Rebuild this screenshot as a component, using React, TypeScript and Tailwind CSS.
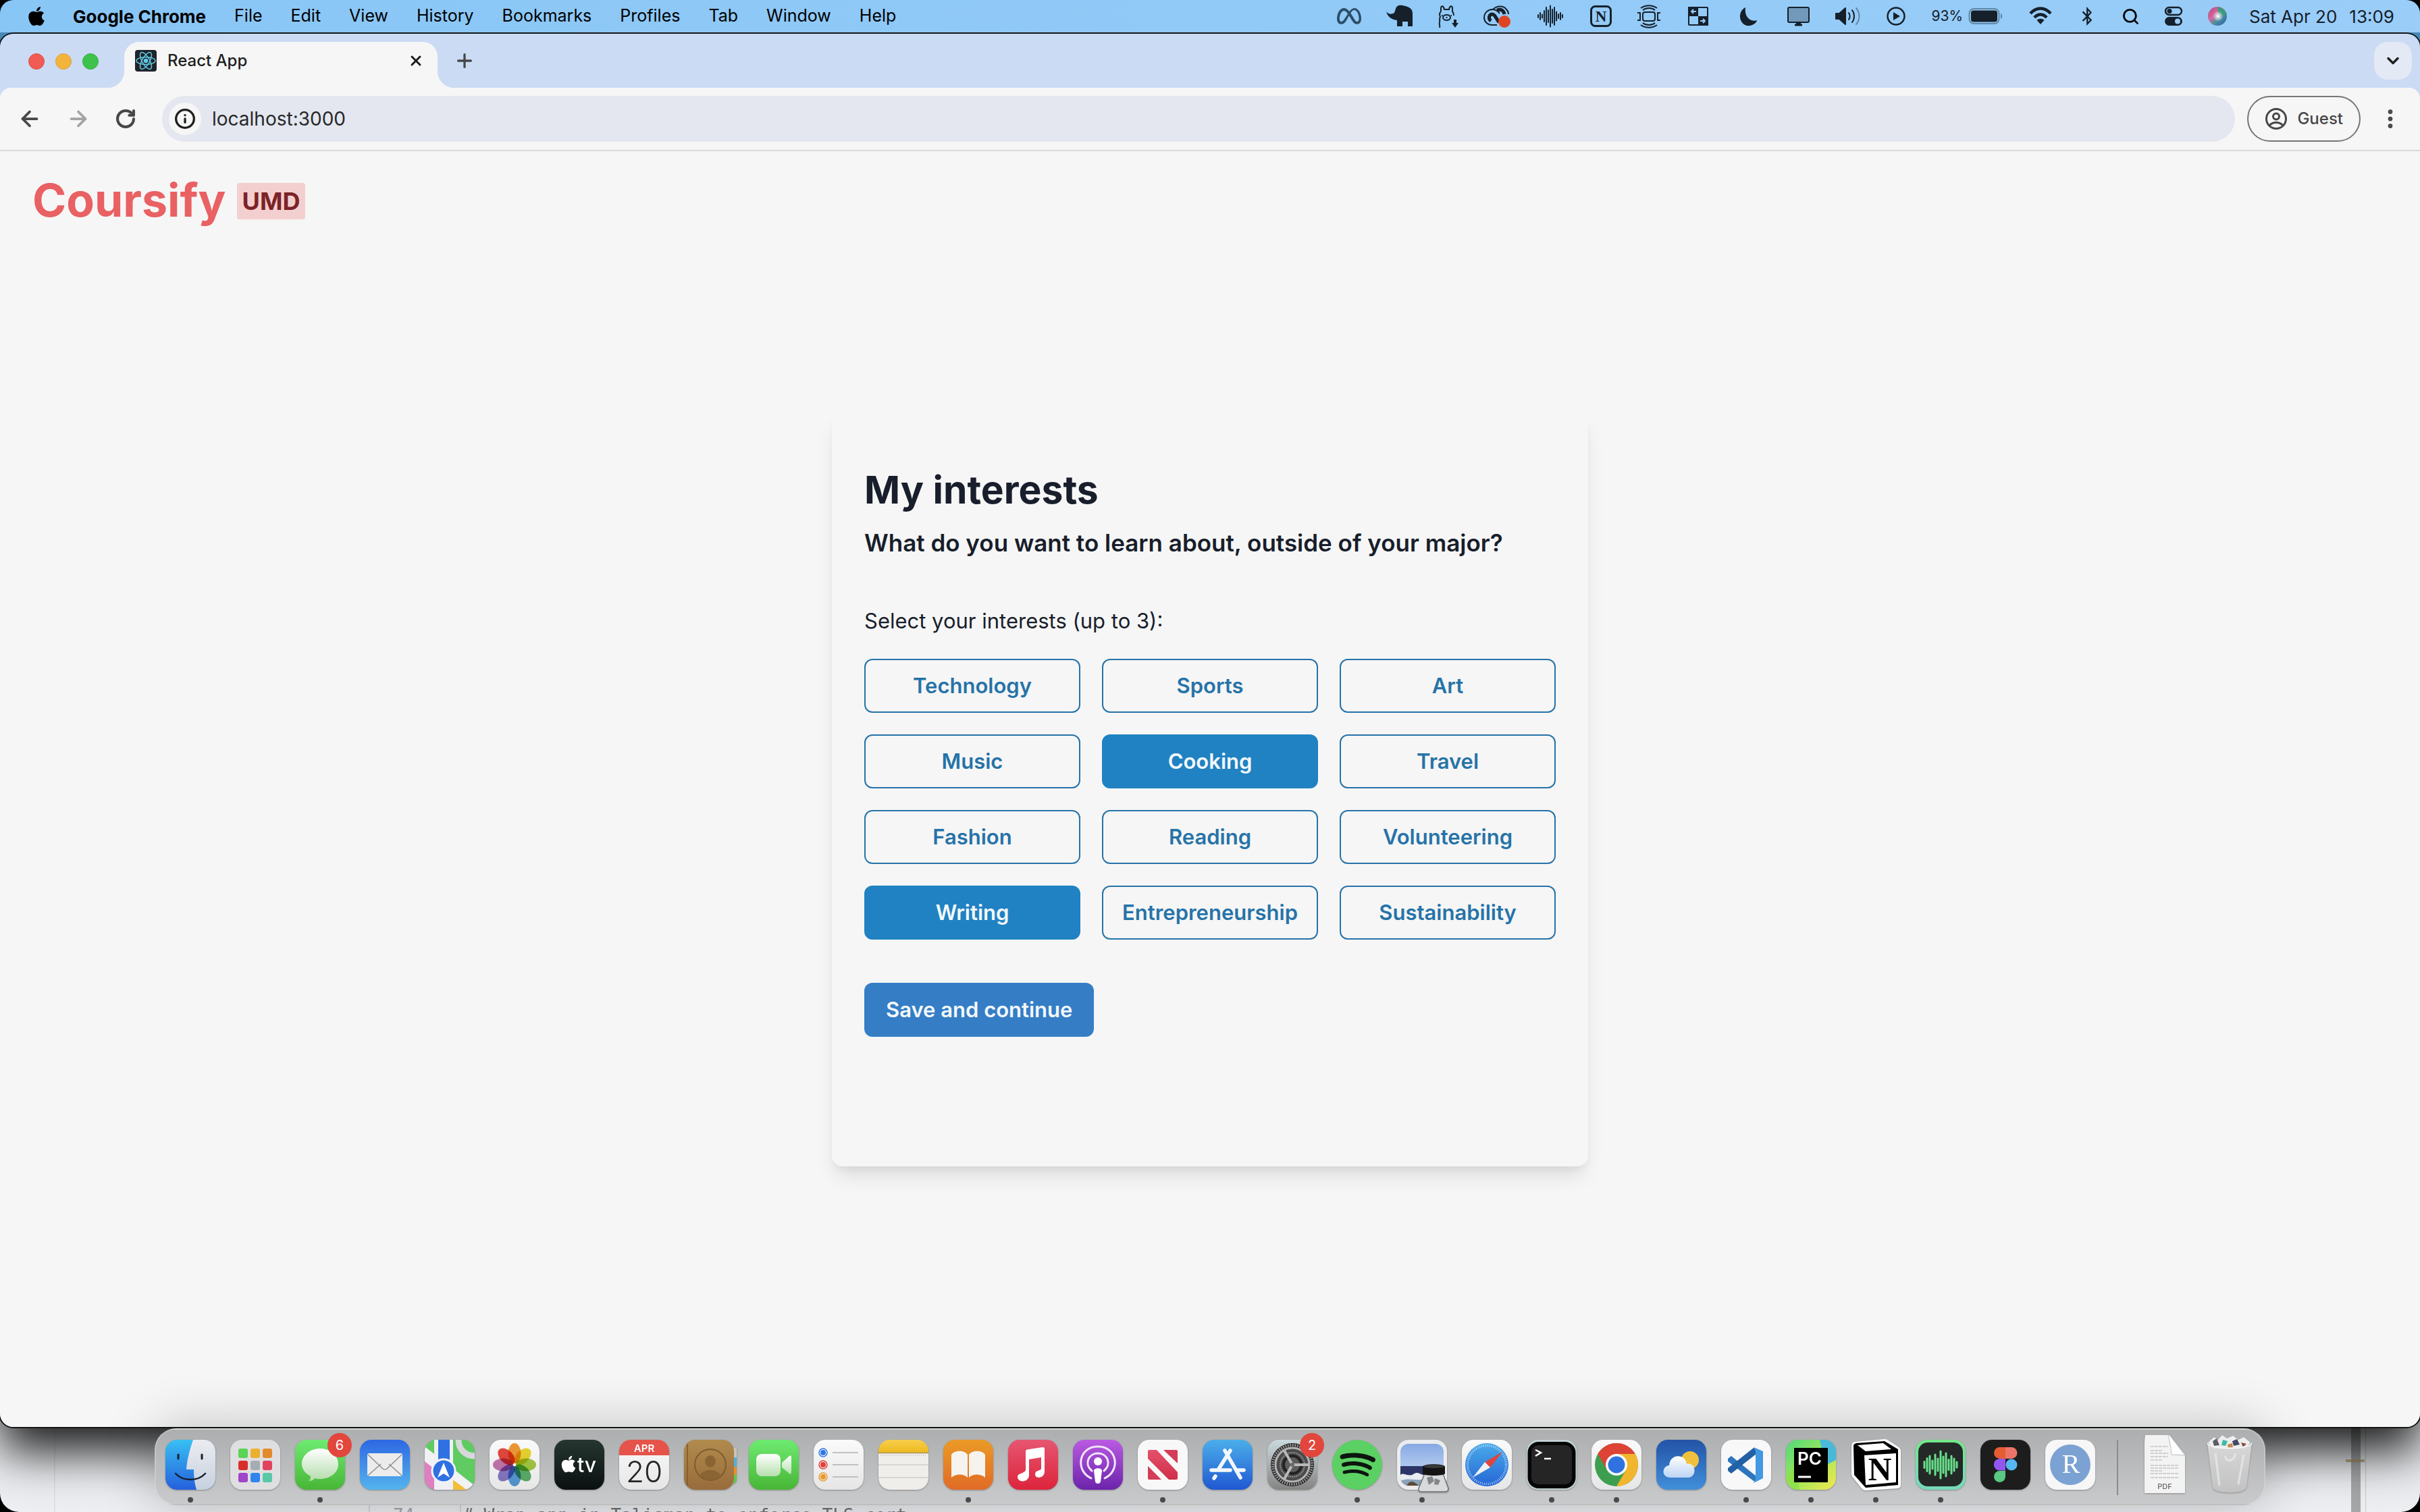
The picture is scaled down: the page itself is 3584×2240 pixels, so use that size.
import { useState } from "react";
import type { ReactNode } from "react";
import { FaApple, FaBluetoothB, FaMeta, FaSpotify } from "react-icons/fa6";
import {
  ArrowLeft,
  ArrowRight,
  ChevronDown,
  EllipsisVertical,
  Info,
  Plus,
  RotateCw,
  Search,
  X,
} from "lucide-react";

const INK = "#15202b";

const menus = ["File", "Edit", "View", "History", "Bookmarks", "Profiles", "Tab", "Window", "Help"];

const interests = [
  "Technology",
  "Sports",
  "Art",
  "Music",
  "Cooking",
  "Travel",
  "Fashion",
  "Reading",
  "Volunteering",
  "Writing",
  "Entrepreneurship",
  "Sustainability",
];

const MAX_INTERESTS = 3;

/* ---------- menu bar ---------- */

interface StatusItemProps {
  label: string;
  width: number;
  children: ReactNode;
}

function StatusItem({ label, width, children }: StatusItemProps) {
  return (
    <button type="button" aria-label={label} className="flex h-12 items-center justify-center">
      <svg
        width={width}
        height={36}
        viewBox={`0 0 ${width} 36`}
        fill="none"
        stroke={INK}
        strokeWidth={2}
        strokeLinejoin="round"
      >
        {children}
      </svg>
    </button>
  );
}

function StatusIcons() {
  const bars = [4, 10, 5, 16, 26, 18, 31, 20, 26, 13, 6, 10, 4];
  return (
    <>
      <StatusItem label="Meta" width={40}>
        <FaMeta x={4} y={0} size={36} fill="#2c4e68" stroke="none" />
      </StatusItem>
      <StatusItem label="TablePlus" width={40}>
        <path
          d="M0 11C4 16 8 15 12 13L14 7C15 2 20 1 24 2C33 4 39 6 39 14V33H32V26H24V33H16V24C8 23 2 19 0 11Z"
          fill={INK}
          stroke="none"
        />
      </StatusItem>
      <StatusItem label="Ollama" width={30}>
        <path d="M4 11V6C4 2 8 2 9 8H16C17 2 21 2 21 6V11C23 13 23 15 23 17M4 11C1 14 2 17 3 19C1 22 3 24 2 27C1 30 3 31 2 35" />
        <ellipse cx={12.5} cy={20} rx={5.5} ry={4} />
        <path d="M12.5 19V21M5 17H6.5M18.500 17H20" />
        <path d="M25 23V29" strokeWidth={4} />
        <path d="M20 28H30L25 35Z" fill={INK} stroke="none" />
      </StatusItem>
      <StatusItem label="Creative Cloud" width={40}>
        <path d="M20 31H13C6 31 1 26 1 20C1 13 7 8 13 8C19 8 22 11 24 14M14 8C20 2 30 2 34 8C36 10 37 12 37 15" />
        <path d="M11 25C6 21 9 15 13 15C17 15 19 22 23 27M20 9C27 7 30 10 31 15" strokeWidth={5} />
        <circle cx={31} cy={26} r={9} fill="#df4422" stroke="none" />
      </StatusItem>
      <StatusItem label="Wave" width={44}>
        {bars.map((h, i) => (
          <path key={i} d={`M${4 + i * 3} ${18 - h / 2}V${18 + h / 2}`} strokeLinecap="round" />
        ))}
      </StatusItem>
      <StatusItem label="Notion" width={32}>
        <rect x={1.5} y={3.5} width={29} height={29} rx={6} strokeWidth={3} />
        <text
          x={16}
          y={26}
          textAnchor="middle"
          fill={INK}
          stroke="none"
          className="font-['Liberation_Serif',serif] text-[23px] font-bold"
        >
          N
        </text>
      </StatusItem>
      <StatusItem label="Rotation" width={36}>
        <rect x={9} y={12} width={18} height={13} rx={3} />
        <path d="M1 13H5V24H1M35 13H31V24H35M9 9C14 5 22 5 27 9M9 28C14 32 22 32 27 28M6 6C13 1 23 1 30 6M6 31C13 36 23 36 30 31" />
      </StatusItem>
      <StatusItem label="Layout" width={36}>
        <rect x={4} y={5} width={28} height={26} rx={1} />
        <path d="M3 4H18V18H3ZM18 18H33V32H18Z" fill={INK} stroke="none" />
        <path d="M15 11H8L11 8M8 11L11 14M21 25H28L25 22M28 25L25 28" stroke="#96ccf6" />
      </StatusItem>
      <StatusItem label="Focus" width={38}>
        <path d="M15 5C4 10 4 28 17 32C24 33 31 29 32 24C22 27 13 19 15 5Z" fill={INK} stroke="none" />
      </StatusItem>
      <StatusItem label="Screen Mirroring" width={36}>
        <rect x={3} y={5} width={31} height={22} rx={2} fill="#7299ba" />
        <path d="M13 31H24M15 29H22" strokeWidth={3} />
      </StatusItem>
      <StatusItem label="Sound" width={38}>
        <path d="M1 14H6L15 6V30L6 22H1Z" fill={INK} />
        <path d="M20 13C22 16 22 20 20 23M25 9C29 14 29 22 25 27" strokeLinecap="round" />
        <path d="M31 6C37 13 37 23 31 30" strokeLinecap="round" opacity={0.4} />
      </StatusItem>
      <StatusItem label="Now Playing" width={30}>
        <circle cx={15} cy={18} r={12.5} strokeWidth={2.5} />
        <path d="M11 12L21 18L11 24Z" fill={INK} stroke="none" />
      </StatusItem>
      <button type="button" className="flex h-12 items-center gap-2 text-[21px] text-[#15202b]">
        93%
        <svg width={52} height={36} viewBox="0 0 52 36" fill="none">
          <rect x={1.5} y={7} width={44} height={22} rx={7} stroke="#5f87a6" strokeWidth={2} />
          <rect x={4} y={9.5} width={39} height={17} rx={4} fill={INK} />
          <path d="M48 14C51 15 51 21 48 22Z" fill="#5f87a6" />
        </svg>
      </button>
      <StatusItem label="Wi-Fi" width={36}>
        <path d="M3 14C12 4 24 4 33 14M9 20C14 14 22 14 27 20" strokeWidth={4.5} />
        <path d="M12.500 24C15 21 21 21 23.500 24L18 30Z" fill={INK} stroke="none" />
      </StatusItem>
      <StatusItem label="Bluetooth" width={28}>
        <FaBluetoothB x={0} y={4} size={28} fill={INK} stroke="none" />
      </StatusItem>
      <StatusItem label="Spotlight" width={26}>
        <Search x={0} y={5} size={27} strokeWidth={2.5} />
      </StatusItem>
      <StatusItem label="Control Center" width={28}>
        <rect x={2} y={5} width={24} height={11} rx={5.500} strokeWidth={2.500} />
        <circle cx={8} cy={10.500} r={3.500} fill={INK} stroke="none" />
        <rect x={1} y={19} width={26} height={13} rx={6.500} fill={INK} stroke="none" />
        <circle cx={20} cy={25.500} r={4} fill="#99ccf7" stroke="none" />
      </StatusItem>
      <StatusItem label="Siri" width={28}>
        <defs>
          <linearGradient id="siri" x1="0" x2="1" y1="0" y2="1">
            <stop offset="0" stopColor="#c2447c" />
            <stop offset="0.4" stopColor="#d06aa0" />
            <stop offset="0.6" stopColor="#4b8f9b" />
            <stop offset="1" stopColor="#2a5fae" />
          </linearGradient>
          <radialGradient id="siriGlow">
            <stop offset="0" stopColor="#ffffff" />
            <stop offset="1" stopColor="#ffffff" stopOpacity="0" />
          </radialGradient>
        </defs>
        <circle cx={14} cy={18} r={14} fill="url(#siri)" stroke="none" />
        <path d="M14 4A14 14 0 0 1 27 15L16 18Z" fill="#3c9a7b" stroke="none" />
        <circle cx={15} cy={18} r={8} fill="url(#siriGlow)" stroke="none" />
      </StatusItem>
    </>
  );
}

function MenuBar() {
  return (
    <header className="relative flex h-12 shrink-0 items-center justify-between rounded-t-[20px] bg-linear-to-r from-[#88c6f6] to-[#9acdf8] pr-[38px] pl-[38px] text-[25px] text-black">
      <nav className="flex items-center gap-[42px]">
        <button type="button" aria-label="Apple menu">
          <FaApple className="size-8" />
        </button>
        <button type="button" className="-ml-1 text-[26px] font-bold">
          Google Chrome
        </button>
        {menus.map((menu) => (
          <button key={menu} type="button">
            {menu}
          </button>
        ))}
      </nav>
      <div className="flex items-center gap-[37px]">
        <StatusIcons />
        <button type="button" className="-ml-1 flex gap-[18px] text-[26px] text-[#15202b]">
          <span>Sat Apr 20</span>
          <span>13:09</span>
        </button>
      </div>
    </header>
  );
}

/* ---------- browser chrome ---------- */

function TabStrip() {
  return (
    <div className="flex h-20 items-end justify-between bg-[#cbdbf4] pr-3 pl-[42px]">
      <div className="flex items-end">
        <div className="flex h-[78px] items-center gap-4">
          <button type="button" aria-label="Close window" className="size-6 rounded-full border border-[#dd5048] bg-[#f15b53]" />
          <button type="button" aria-label="Minimize window" className="size-6 rounded-full border border-[#dfa036] bg-[#f3b43c]" />
          <button type="button" aria-label="Zoom window" className="size-6 rounded-full border border-[#36ae42] bg-[#3dc34b]" />
        </div>
        <span className="ml-[14px] size-6 bg-[radial-gradient(circle_at_0_0,#cbdbf4_24px,#f6f6f6_24px)]" />
        <div className="flex h-[68px] w-[464px] items-center rounded-t-[22px] bg-[#f6f6f6] px-4 pb-3">
          <svg width={32} height={32} viewBox="0 0 32 32" fill="none" stroke="#61cbe6" strokeWidth={1.5}>
            <rect width={32} height={32} rx={4} fill="#20232a" stroke="none" />
            <ellipse cx={16} cy={16} rx={14} ry={5.500} />
            <ellipse cx={16} cy={16} rx={14} ry={5.500} transform="rotate(60 16 16)" />
            <ellipse cx={16} cy={16} rx={14} ry={5.500} transform="rotate(120 16 16)" />
            <circle cx={16} cy={16} r={2.500} fill="#61cbe6" />
          </svg>
          <span className="ml-4 flex-1 text-[24px] font-medium text-[#1f1f1f]">React App</span>
          <button type="button" aria-label="Close tab" className="flex size-8 items-center justify-center">
            <X className="size-6" strokeWidth={3} color="#1f1f1f" />
          </button>
        </div>
        <span className="size-6 bg-[radial-gradient(circle_at_100%_0,#cbdbf4_24px,#f6f6f6_24px)]" />
        <button type="button" aria-label="New tab" className="flex h-20 w-8 items-center justify-center">
          <Plus className="size-8 shrink-0" strokeWidth={2.5} color="#474747" />
        </button>
      </div>
      <button
        type="button"
        aria-label="Search tabs"
        className="mb-3 flex size-14 items-center justify-center rounded-[20px] bg-[#e3e9f5]"
      >
        <ChevronDown className="size-7" strokeWidth={3} color="#1f1f1f" />
      </button>
    </div>
  );
}

function Toolbar() {
  return (
    <div className="bg-[#cbdbf4]">
      <div className="flex h-[94px] items-center rounded-t-[16px] border-b-2 border-[#d9d9d9] bg-[#f6f6f6] pr-[26px] pl-[26px]">
        <div className="flex items-center gap-9 text-[#474747]">
          <button type="button" aria-label="Back">
            <ArrowLeft className="size-9" strokeWidth={2.5} />
          </button>
          <button type="button" aria-label="Forward" className="text-[#a3a3a3]">
            <ArrowRight className="size-9" strokeWidth={2.5} />
          </button>
          <button type="button" aria-label="Reload">
            <RotateCw className="size-8" strokeWidth={3} />
          </button>
        </div>
        <div className="ml-[38px] flex h-[68px] flex-1 items-center gap-4 rounded-full bg-[#e4e7ef] pr-6 pl-[10px]">
          <button
            type="button"
            aria-label="View site information"
            className="flex size-12 items-center justify-center rounded-full bg-[#f6f6f6]"
          >
            <Info className="size-8" strokeWidth={2.5} color="#1f1f1f" />
          </button>
          <input
            type="text"
            aria-label="Address and search bar"
            defaultValue="localhost:3000"
            className="h-12 flex-1 bg-transparent text-[28px] text-[#27282a] outline-none"
          />
        </div>
        <button
          type="button"
          className="ml-[18px] flex h-[68px] items-center gap-[14px] rounded-full border-2 border-[#747775] px-6 text-[24px] font-medium text-[#474747]"
        >
          <svg width={34} height={34} viewBox="0 0 34 34" fill="none" stroke="#474747" strokeWidth={3}>
            <circle cx={17} cy={17} r={14.500} />
            <circle cx={17} cy={13.500} r={4.500} />
            <path d="M7 27C12 21 22 21 27 27" />
          </svg>
          Guest
        </button>
        <button type="button" aria-label="Chrome menu" className="ml-[26px]">
          <EllipsisVertical className="size-9" strokeWidth={2.5} color="#474747" />
        </button>
      </div>
    </div>
  );
}

/* ---------- page ---------- */

function InterestsForm() {
  const [selected, setSelected] = useState<string[]>(["Cooking", "Writing"]);

  const toggle = (interest: string) => {
    if (selected.includes(interest)) {
      setSelected(selected.filter((item) => item !== interest));
    } else if (selected.length < MAX_INTERESTS) {
      setSelected([...selected, interest]);
    }
  };

  return (
    <section className="w-full max-w-[1120px] justify-self-center rounded-[16px] px-12 pt-20 pb-48 text-[#181e2b] shadow-[0_20px_30px_-6px_rgba(0,0,0,0.1),0_8px_12px_-4px_rgba(0,0,0,0.06)]">
      <h1 className="text-[57px] leading-[72px] font-bold">My interests</h1>
      <h2 className="mt-[18px] text-[35px] leading-[48px] font-semibold">
        What do you want to learn about, outside of your major?
      </h2>
      <p id="interests-label" className="mt-[68px] text-[31px] leading-[48px]">
        Select your interests (up to 3):
      </p>
      <div role="group" aria-labelledby="interests-label" className="mt-8 grid grid-cols-3 gap-8">
        {interests.map((interest) => {
          const active = selected.includes(interest);
          return (
            <button
              key={interest}
              type="button"
              aria-pressed={active}
              onClick={() => toggle(interest)}
              className={`h-20 rounded-[12px] border-2 text-[31px] font-semibold ${
                active ? "border-[#2082c2] bg-[#2082c2] text-[#f4f8fb]" : "border-[#2673a8] text-[#2673a8]"
              }`}
            >
              {interest}
            </button>
          );
        })}
      </div>
      <button type="button" className="mt-16 h-20 rounded-[12px] bg-[#357ec6] px-8 text-[31px] font-semibold text-[#f4f8fb]">
        Save and continue
      </button>
    </section>
  );
}

function Page() {
  return (
    <main className="grid flex-1 grid-rows-[1fr_auto_1fr] bg-[#f6f6f6]">
      <div className="flex items-start px-12 pt-8">
        <a href="#" className="flex items-center gap-4">
          <span className="text-[68px] leading-[80px] font-bold text-[#e96163]">Coursify</span>
          <span className="mt-1 flex h-[54px] items-center rounded-[4px] bg-[#f4cfcf] px-2 text-[36px] font-bold text-[#7c2327]">
            UMD
          </span>
        </a>
      </div>
      <InterestsForm />
    </main>
  );
}

/* ---------- dock ---------- */

function Tile({ fill, rx = 17 }: { fill: string; rx?: number }) {
  return <rect width={74} height={74} rx={rx} fill={fill} />;
}

function Gradient({ id, from, to }: { id: string; from: string; to: string }) {
  return (
    <linearGradient id={id} x1="0" x2="0" y1="0" y2="1">
      <stop offset="0" stopColor={from} />
      <stop offset="1" stopColor={to} />
    </linearGradient>
  );
}

function DockDefs() {
  return (
    <svg width={0} height={0} className="absolute" aria-hidden="true">
      <defs>
        <clipPath id="tile">
          <rect width={74} height={74} rx={17} />
        </clipPath>
        <clipPath id="shot">
          <rect x={5} y={6} width={64} height={62} rx={12} />
        </clipPath>
        <Gradient id="finder" from="#38c0f3" to="#2560dc" />
        <Gradient id="finderFace" from="#ebecf1" to="#c6d1df" />
        <Gradient id="green" from="#6eea71" to="#48b636" />
        <Gradient id="bubble" from="#ffffff" to="#b4dcac" />
        <Gradient id="mail" from="#2e68e3" to="#54b4ee" />
        <Gradient id="white" from="#fafafa" to="#e6e6e6" />
        <Gradient id="black" from="#25352f" to="#0b1011" />
        <Gradient id="leather" from="#b08b4d" to="#996c3b" />
        <Gradient id="camera" from="#ffffff" to="#b6dfae" />
        <Gradient id="notes" from="#f8cf4c" to="#ecb91f" />
        <Gradient id="books" from="#ea9a26" to="#e16b26" />
        <Gradient id="music" from="#e65670" to="#dd243c" />
        <Gradient id="podcasts" from="#ba5ae2" to="#6b24ab" />
        <Gradient id="news" from="#e6506c" to="#cf3048" />
        <Gradient id="store" from="#4baeea" to="#2058d2" />
        <Gradient id="settings" from="#cadade" to="#858483" />
        <Gradient id="safari" from="#4aabe9" to="#2465d6" />
        <Gradient id="sky" from="#87a9e4" to="#b0c9ee" />
        <Gradient id="weather" from="#2353a6" to="#418fda" />
        <Gradient id="cloud" from="#ffffff" to="#bcd4f4" />
        <Gradient id="teal" from="#73e889" to="#76d8bd" />
        <Gradient id="trash" from="#dfdfdf" to="#c6c6c6" />
        <linearGradient id="pycharm" x1="0" x2="1" y1="0" y2="1">
          <stop offset="0" stopColor="#51d97c" />
          <stop offset="0.5" stopColor="#9de65b" />
          <stop offset="1" stopColor="#f4e94e" />
        </linearGradient>
      </defs>
    </svg>
  );
}

function Finder() {
  return (
    <g clipPath="url(#tile)">
      <Tile fill="url(#finder)" />
      <path d="M41 0C36 15 32 29 31 44H42C42 55 43 65 46 74H74V0Z" fill="url(#finderFace)" />
      <path d="M19 22V28M54 22V28" stroke="#14202e" strokeWidth={3} strokeLinecap="round" />
      <path d="M15 50C26 62 48 62 59 50" stroke="#14202e" strokeWidth={2.5} fill="none" strokeLinecap="round" />
    </g>
  );
}

function Launchpad() {
  const colors = ["#5bd353", "#ecb02f", "#e48a2c", "#d92f2b", "#a5adb3", "#e2435f", "#a044c9", "#3186ee", "#58c8a6"];
  return (
    <>
      <Tile fill="#dfdfe1" />
      {colors.map((color, i) => (
        <rect key={color} x={12 + (i % 3) * 18} y={13 + Math.floor(i / 3) * 18} width={14} height={14} rx={3} fill={color} />
      ))}
    </>
  );
}

function Messages() {
  return (
    <>
      <Tile fill="url(#green)" />
      <path d="M37 13C52 13 64 23 64 36S52 58 37 58C34 58 31 58 29 57C27 60 24 61 20 61C23 59 23 56 23 54C15 50 10 43 10 36C10 23 22 13 37 13Z" fill="url(#bubble)" />
    </>
  );
}

function Mail() {
  return (
    <>
      <Tile fill="url(#mail)" />
      <rect x={11} y={20} width={52} height={34} rx={3} fill="#ececec" />
      <path d="M12 53L31 36M62 53L43 36M12 22L33 42C36 45 38 45 41 42L62 22" stroke="#8e8e8e" strokeWidth={1.5} fill="none" />
    </>
  );
}

function Maps() {
  return (
    <g clipPath="url(#tile)">
      <Tile fill="#5fcb61" />
      <path d="M0 24V74H20V38Z" fill="#df7fc0" />
      <path d="M0 10L74 68V74H54L0 32Z" fill="#f1f2f4" />
      <path d="M40 74V58L62 74Z" fill="#f2bf35" />
      <path d="M14 0H42V74H14Z" fill="#eef0f4" />
      <path d="M20 0H37V40H20Z" fill="#2f71e2" />
      <path d="M50 0C50 14 60 24 74 24" stroke="#d6d8dc" strokeWidth={9} fill="none" />
      <circle cx={28} cy={46} r={17} fill="#2f71e2" stroke="#f1f3f7" strokeWidth={3} />
      <path d="M28 34L37 56L28 50L19 56Z" fill="#ffffff" />
    </g>
  );
}

function Photos() {
  const petals = ["#f19a37", "#ecd730", "#a5cb45", "#5fb36c", "#5a9fdb", "#8a7bc9", "#c678b0", "#e5493f"];
  return (
    <>
      <Tile fill="url(#white)" />
      {petals.map((color, i) => (
        <ellipse
          key={color}
          cx={37}
          cy={20}
          rx={9.5}
          ry={15}
          fill={color}
          transform={`rotate(${i * 45} 37 37)`}
          className="mix-blend-multiply"
        />
      ))}
      <circle cx={37} cy={37} r={2} fill="#ffffff" opacity={0.7} />
    </>
  );
}

function AppleTv() {
  return (
    <>
      <Tile fill="url(#black)" />
      <FaApple x={7} y={22} size={28} fill="#ffffff" />
      <text x={34} y={48} fill="#ffffff" className="text-[30px] font-medium">
        tv
      </text>
    </>
  );
}

function Calendar() {
  return (
    <g clipPath="url(#tile)">
      <Tile fill="url(#white)" />
      <rect width={74} height={23} fill="#e5534a" />
      <text x={37} y={18} textAnchor="middle" fill="#ffffff" className="text-[15px] font-semibold">
        APR
      </text>
      <text x={37} y={63} textAnchor="middle" fill="#262626" className="text-[44px] font-light">
        20
      </text>
    </g>
  );
}

function Contacts() {
  return (
    <>
      <path d="M70 12H76Q78 12 78 16V26H70Z" fill="#c9c5b9" />
      <path d="M70 26H78V40H70Z" fill="#4fb0dd" />
      <path d="M70 40H78V52H70Z" fill="#e88f2e" />
      <path d="M70 52H78V60Q76 65 70 66Z" fill="#5cc855" />
      <Tile fill="url(#leather)" />
      <path d="M5 6V68" stroke="#86602f" strokeWidth={2} />
      <circle cx={39} cy={37} r={23} fill="none" stroke="#7f5b2e" strokeWidth={2} />
      <ellipse cx={39} cy={32} rx={8} ry={9} fill="#8a6433" />
      <path d="M23 53C29 42 49 42 55 53C48 62 30 62 23 53Z" fill="#8a6433" />
    </>
  );
}

function FaceTime() {
  return (
    <>
      <Tile fill="url(#green)" />
      <rect x={11} y={21} width={36} height={33} rx={8} fill="url(#camera)" />
      <path d="M49 34L60 24Q63 22 63 26V48Q63 52 60 50L49 41Z" fill="url(#camera)" />
    </>
  );
}

function Reminders() {
  return (
    <>
      <Tile fill="url(#white)" />
      {["#2f76e4", "#df4038", "#e99a2c"].map((color, i) => (
        <g key={color} fill="none">
          <circle cx={14} cy={19 + i * 18} r={6} stroke={color} strokeWidth={1.5} />
          <circle cx={14} cy={19 + i * 18} r={4} fill={color} />
          <path d={`M28 ${19 + i * 18}H66`} stroke="#b0b0b3" strokeWidth={1.5} />
        </g>
      ))}
    </>
  );
}

function Notes() {
  return (
    <g clipPath="url(#tile)">
      <Tile fill="#efeeeb" />
      <rect width={74} height={19} fill="url(#notes)" />
      <path d="M0 19.500H74" stroke="#a8935a" strokeWidth={1.5} />
      <path d="M3 23H72" stroke="#a9a9a9" strokeWidth={1} strokeDasharray="1 2" />
      <path d="M0 37H74M0 56H74" stroke="#cfcecb" strokeWidth={1.5} />
    </g>
  );
}

function Books() {
  return (
    <>
      <Tile fill="url(#books)" />
      <path d="M12 22C17 15 31 15 36 22V56C31 50 18 50 12 56ZM38 22C43 15 57 15 62 22V56C56 50 43 50 38 56Z" fill="#f6f3ef" />
    </>
  );
}

function Music() {
  return (
    <>
      <Tile fill="url(#music)" />
      <path
        d="M26 17Q26 15 28 14.500L51 11Q54 11 54 13V47C54 57 40 59 40 51C40 45 48 46 49 43V26L31 29V52C31 64 14 64 14 55C14 49 25 50 26 45Z"
        fill="#ffffff"
      />
    </>
  );
}

function Podcasts() {
  return (
    <>
      <Tile fill="url(#podcasts)" />
      <g fill="none" stroke="#f3e7fa" strokeWidth={3} strokeLinecap="round">
        <path d="M27 57C3 46 8 10 37 10S71 46 47 57" />
        <path d="M28 46C16 36 23 20 37 20S58 36 46 46" />
      </g>
      <circle cx={37} cy={32} r={6} fill="#ffffff" />
      <path d="M31 46C31 41 43 41 43 46L41 62C40 66 34 66 33 62Z" fill="#ffffff" />
    </>
  );
}

function News() {
  return (
    <>
      <Tile fill="#f8f8f8" />
      <path d="M15 17Q15 15 17 15H28L59 48V57Q59 59 57 59H46L15 28Z" fill="url(#news)" />
      <path d="M38 15H57Q59 15 59 17V35Z" fill="#d43c57" />
      <path d="M15 39V57Q15 59 17 59H35Z" fill="#d43c57" />
    </>
  );
}

function AppStore() {
  return (
    <>
      <Tile fill="url(#store)" />
      <path d="M33 16L56 56M41 16L24 43M19 54L17 57M13 45H41M52 45H61" stroke="#f3f8fd" strokeWidth={5.5} strokeLinecap="round" />
    </>
  );
}

function Settings() {
  return (
    <>
      <Tile fill="url(#settings)" />
      <circle cx={37} cy={37} r={32} fill="#2c2c2c" />
      <circle cx={37} cy={37} r={29} fill="none" stroke="#a8a8a8" strokeWidth={4} strokeDasharray="1.5 2" />
      <circle cx={37} cy={37} r={25} fill="#4b4b4b" stroke="#b3b3b3" strokeWidth={3} />
      <circle cx={37} cy={37} r={18} fill="none" stroke="#8f8f8f" strokeWidth={2} strokeDasharray="2 1" />
      <circle cx={37} cy={37} r={13} fill="#5d5d5d" stroke="#222222" strokeWidth={4} />
      <path d="M37 37H61M37 37L25 16M37 37L25 58" stroke="#b9b9b9" strokeWidth={4} />
      <circle cx={37} cy={37} r={3} fill="#6b6b6b" />
    </>
  );
}

function Spotify() {
  return (
    <>
      <circle cx={37} cy={37} r={36} fill="#0d150f" />
      <FaSpotify x={-1} y={-1} size={76} fill="#5bd163" />
    </>
  );
}

function Preview() {
  return (
    <>
      <Tile fill="#ececee" />
      <g clipPath="url(#shot)">
        <rect x={5} y={6} width={64} height={34} fill="url(#sky)" />
        <rect x={5} y={39} width={64} height={15} fill="#2d3566" />
        <rect x={5} y={52} width={64} height={16} fill="#8aa3b8" />
        <path d="M5 52C12 47 16 57 24 51S36 54 42 52V58C30 62 18 55 5 61Z" fill="#e9edf1" />
        <path d="M14 68C18 60 24 60 32 68Z" fill="#5d4a38" />
      </g>
      <path d="M41 50H68L76 72Q76 77 71 77H36Q31 77 32 72Z" fill="#d8dadc" stroke="#6f7173" strokeWidth={1.5} />
      <path d="M44 56L52 54L55 61L47 67ZM56 57L64 60L61 67L55 66Z" fill="#84878a" />
      <path d="M38 40C38 35 71 35 71 40V50C71 54 38 54 38 50Z" fill="#141414" />
      <ellipse cx={54.5} cy={39.500} rx={15} ry={2.500} fill="#3a3a3a" />
    </>
  );
}

function Safari() {
  return (
    <>
      <Tile fill="url(#white)" />
      <circle cx={37} cy={37} r={32} fill="url(#safari)" />
      <circle cx={37} cy={37} r={28.500} fill="none" stroke="#d8eafa" strokeWidth={3.5} strokeDasharray="1 2" opacity={0.8} />
      <path d="M60 18L42 41L34 33Z" fill="#e0453c" />
      <path d="M16 56L34 33L42 41Z" fill="#f0f0f0" />
    </>
  );
}

function Terminal() {
  return (
    <>
      <Tile fill="#c2d3d5" />
      <rect x={1.5} y={3} width={71} height={69} rx={16} fill="#060606" />
      <rect x={7} y={8} width={60} height={58} rx={10} fill="#252525" />
      <path d="M13 15L21 19L13 24M26 28H36" stroke="#ffffff" strokeWidth={2.5} fill="none" />
    </>
  );
}

function Chrome() {
  return (
    <>
      <Tile fill="url(#white)" />
      <circle cx={37} cy={37} r={32} fill="#3c9f50" />
      <path d="M9.300 21A32 32 0 0 1 64.700 21H37L23 45Z" fill="#dd4436" />
      <path d="M64.700 21A32 32 0 0 1 37 69L51 45L37 21Z" fill="#f1b62d" />
      <circle cx={37} cy={37} r={16} fill="#ffffff" />
      <circle cx={37} cy={37} r={12.500} fill="#3073e0" />
    </>
  );
}

function Weather() {
  return (
    <>
      <Tile fill="url(#weather)" />
      <circle cx={50} cy={30} r={13} fill="#f1c13d" />
      <path d="M21 56C7 56 8 39 19 38C20 20 43 20 45 36C59 32 61 56 47 56Z" fill="url(#cloud)" />
    </>
  );
}

function VsCode() {
  return (
    <>
      <Tile fill="#f8f8f8" />
      <path d="M10 28L15 24L52 54V62L48 61L10 32Z" fill="#2d76bd" />
      <path d="M10 46L15 50L52 21V13L48 12L10 42Z" fill="#2460a4" />
      <path d="M48 11L62 17V57L48 64L51 58V17Z" fill="#4398e2" />
    </>
  );
}

function PyCharm() {
  return (
    <g clipPath="url(#tile)">
      <Tile fill="url(#pycharm)" />
      <path d="M50 0H74V30L58 38Z" fill="#4ab9d9" />
      <path d="M0 60L14 30L20 74H10Z" fill="#8fe04c" />
      <rect x={12} y={12} width={50} height={51} fill="#000000" />
      <text x={17} y={37} fill="#ffffff" className="text-[26px] font-semibold">
        PC
      </text>
      <path d="M18 55H37" stroke="#ffffff" strokeWidth={3} />
    </g>
  );
}

function Notion() {
  return (
    <>
      <path d="M1 10Q1 4 6 3L50-1Q54-1 57 2L71 11Q74 13 74 17V67Q74 71 70 72L22 75Q18 75 16 72L4 57Q1 54 1 50Z" fill="#ffffff" />
      <path d="M4 9Q4 6 8 5L50 2L70 14V67L22 71L5 52Z" fill="#000000" />
      <path d="M10 8L48 5L60 14L22 17Z" fill="#ffffff" />
      <path d="M20 23L67 20V63L22 67Z" fill="#ffffff" />
      <text
        x={43}
        y={60}
        textAnchor="middle"
        fill="#000000"
        className="font-['Liberation_Serif',serif] text-[48px] font-bold"
      >
        N
      </text>
    </>
  );
}

function Waveform() {
  const bars = [9, 19, 26, 12, 30, 18, 40, 24, 34, 15, 26, 18, 8];
  return (
    <>
      <Tile fill="url(#teal)" />
      <rect x={4} y={4} width={66} height={65} rx={14} fill="#242826" />
      {bars.map((h, i) => (
        <path key={i} d={`M${13 + i * 4} ${37 - h / 2}V${37 + h / 2}`} stroke="#68e08c" strokeWidth={3} strokeLinecap="round" />
      ))}
    </>
  );
}

function Figma() {
  return (
    <>
      <Tile fill="#1d1d1d" />
      <path d="M37 11H28.500A8.500 8.500 0 0 0 28.500 28H37Z" fill="#e65c33" />
      <path d="M37 11H46A8.500 8.500 0 0 1 46 28H37Z" fill="#ec7468" />
      <path d="M37 28H28.500A8.500 8.500 0 0 0 28.500 45.500H37Z" fill="#9257f0" />
      <circle cx={46} cy={37} r={8.500} fill="#56b6f2" />
      <path d="M37 46H28.500A8.500 8.500 0 1 0 37 54.500Z" fill="#58c882" />
    </>
  );
}

function RStudio() {
  return (
    <>
      <Tile fill="#f7f7f8" />
      <circle cx={37} cy={37} r={30} fill="#7ba2d2" />
      <text x={38} y={49} textAnchor="middle" fill="#ffffff" className="font-['Liberation_Serif',serif] text-[40px]">
        R
      </text>
    </>
  );
}

function PdfDocument() {
  const lines = [10, 16, 20, 25, 30, 38, 42, 46, 50, 56];
  return (
    <>
      <path d="M8-7H44L67 22V79H7V3Z" fill="#f3f3f3" />
      {lines.map((y, i) => (
        <path key={y} d={`M16 ${y}H${i % 3 === 1 ? 34 : i < 4 ? 42 : 58}`} stroke="#c4c4c4" strokeWidth={1.5} strokeDasharray="5 1" />
      ))}
      <path d="M44-7L67 23L47 22Q46 8 42-7Z" fill="#ffffff" stroke="#bdbdbd" strokeWidth={1} />
      <text x={37} y={73} textAnchor="middle" fill="#666666" className="text-[11px] font-medium">
        PDF
      </text>
    </>
  );
}

function Trash() {
  return (
    <>
      <path d="M5 4L14-4L20 0L26-7L33-2L42-6L50 0L58-4L68 4L60 13L14 14Z" fill="#ededed" />
      <path d="M12 2L18-2L22 8L14 9Z" fill="#5b5f63" />
      <path d="M27 0L34 2L31 9L25 8Z" fill="#3fb9a6" />
      <path d="M41 2L48-1L52 7L43 9Z" fill="#444a63" />
      <path d="M34 7L41 5L42 13L35 14Z" fill="#c98a4e" />
      <path d="M54 4L62 6L57 11Z" fill="#8d4a3c" />
      <path d="M4 4C8 14 66 14 70 4L62 70C61 81 13 81 12 70Z" fill="url(#trash)" opacity={0.92} />
      <path d="M4 5C8 15 66 15 70 5" stroke="#f7f7f7" strokeWidth={2} fill="none" />
      <path d="M16 20L22 68M58 22L50 66M30 24C34 36 44 30 46 20" stroke="#ececec" strokeWidth={3} fill="none" opacity={0.7} />
    </>
  );
}

interface DockApp {
  name: string;
  art: ReactNode;
  running?: boolean;
  badge?: number;
}

const apps: DockApp[] = [
  { name: "Finder", art: <Finder />, running: true },
  { name: "Launchpad", art: <Launchpad /> },
  { name: "Messages", art: <Messages />, running: true, badge: 6 },
  { name: "Mail", art: <Mail /> },
  { name: "Maps", art: <Maps /> },
  { name: "Photos", art: <Photos /> },
  { name: "TV", art: <AppleTv /> },
  { name: "Calendar", art: <Calendar /> },
  { name: "Contacts", art: <Contacts /> },
  { name: "FaceTime", art: <FaceTime /> },
  { name: "Reminders", art: <Reminders /> },
  { name: "Notes", art: <Notes /> },
  { name: "Books", art: <Books />, running: true },
  { name: "Music", art: <Music /> },
  { name: "Podcasts", art: <Podcasts /> },
  { name: "News", art: <News />, running: true },
  { name: "App Store", art: <AppStore /> },
  { name: "System Settings", art: <Settings />, badge: 2 },
  { name: "Spotify", art: <Spotify />, running: true },
  { name: "Preview", art: <Preview />, running: true },
  { name: "Safari", art: <Safari /> },
  { name: "Terminal", art: <Terminal />, running: true },
  { name: "Google Chrome", art: <Chrome />, running: true },
  { name: "Weather", art: <Weather /> },
  { name: "Visual Studio Code", art: <VsCode />, running: true },
  { name: "PyCharm", art: <PyCharm />, running: true },
  { name: "Notion", art: <Notion />, running: true },
  { name: "Wave", art: <Waveform />, running: true },
  { name: "Figma", art: <Figma /> },
  { name: "RStudio", art: <RStudio /> },
];

function DockItem({ name, art, running, badge }: DockApp) {
  return (
    <button type="button" aria-label={name} className="relative flex w-[74px] flex-col items-center gap-[11px]">
      <svg width={74} height={74} viewBox="0 0 74 74" className="overflow-visible drop-shadow-[0_1px_1px_rgba(0,0,0,0.3)]">
        {art}
      </svg>
      <span className={`size-2 rounded-full ${running ? "bg-[#4a4a4b]" : ""}`} />
      {badge && (
        <span className="absolute -top-[10px] -right-[10px] flex size-9 items-center justify-center rounded-full bg-[#e2463c] text-[20px] text-white">
          {badge}
        </span>
      )}
    </button>
  );
}

function Dock() {
  return (
    <footer className="relative flex h-[126px] shrink-0 justify-center">
      {/* editor window peeking out below the browser */}
      <span className="absolute top-0 left-20 h-full w-0.5 bg-black/5" />
      <span className="absolute top-0 left-[546px] h-full w-0.5 bg-black/10" />
      <span className="absolute top-0 left-[681px] h-full w-0.5 bg-black/10" />
      <span className="absolute top-0 right-[88px] h-full w-[14px] bg-black/30" />
      <span className="absolute top-12 right-[82px] h-1 w-7 bg-[#77683f]/70" />
      <span className="absolute top-0 right-20 h-full w-px bg-black/15" />
      <div className="absolute inset-x-0 bottom-0 flex h-2.5 gap-[72px] overflow-hidden pl-[582px] font-['DejaVu_Sans_Mono',monospace] text-[26px] leading-[30px] whitespace-pre text-[#6f7175]">
        <span className="text-[#a3a7b0]">74</span>
        <span># Wrap app in Talisman to enforce TLS cert</span>
      </div>

      <nav
        aria-label="Dock"
        className="relative mt-0.5 flex h-[114px] gap-[22px] rounded-[32px] border-2 border-white/20 bg-linear-to-b from-[#acaeaf] to-[#c9cacb] px-[14px] pt-[15px] shadow-[0_0_80px_rgba(0,0,0,0.24)]"
      >
        <DockDefs />
        {apps.map((app) => (
          <DockItem key={app.name} {...app} />
        ))}
        <span className="flex w-[22px] justify-center">
          <span className="h-[82px] w-0.5 bg-[#8b8c8d]" />
        </span>
        <DockItem name="PDF document" art={<PdfDocument />} />
        <DockItem name="Trash" art={<Trash />} />
      </nav>
    </footer>
  );
}

export default function App() {
  return (
    <div className="bg-black font-['Inter',sans-serif]">
      <div className="flex min-h-screen flex-col overflow-hidden rounded-t-[20px] rounded-b-[28px] bg-linear-to-b from-[#4d93c4] from-5% to-[#eceef1] to-10%">
        <MenuBar />
        <div className="mt-0.5 flex flex-1 flex-col overflow-hidden rounded-[20px] shadow-[0_0_0_2px_#141614,0_36px_70px_rgba(0,0,0,0.9)]">
          <TabStrip />
          <Toolbar />
          <Page />
        </div>
        <Dock />
      </div>
    </div>
  );
}
